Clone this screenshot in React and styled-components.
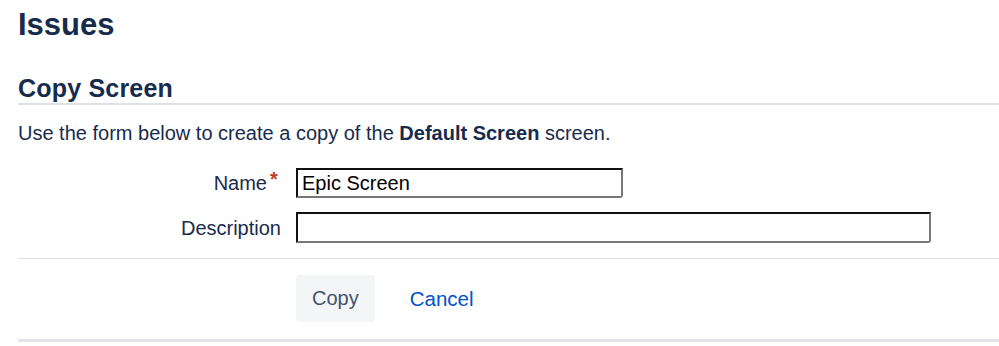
import styled, { createGlobalStyle } from 'styled-components';

const GlobalStyle = createGlobalStyle`
  html, body {
    margin: 0;
    padding: 0;
    background: #fff;
  }
  body {
    font-family: 'Liberation Sans', Arial, sans-serif;
    color: #172b4d;
  }
`;

const Page = styled.main`
  padding: 6px 0 0 18px;
`;

const Title = styled.h1`
  margin: 0;
  font-size: 31px;
  line-height: 37px;
  font-weight: 700;
  color: #172b4d;
`;

const Section = styled.section`
  margin-top: 30px;
`;

const SectionTitle = styled.h2`
  margin: 0;
  font-size: 25px;
  line-height: 30px;
  font-weight: 700;
  letter-spacing: 0.2px;
  color: #172b4d;
  border-bottom: 2px solid #dfe1e6;
`;

const Intro = styled.p`
  margin: 16px 0 0;
  font-size: 20px;
  line-height: 24px;
  b {
    font-weight: 700;
  }
`;

const Form = styled.form`
  margin-top: 23px;
`;

const Fields = styled.div`
  display: grid;
  grid-template-columns: 263px 1fr;
  column-gap: 15px;
  row-gap: 14px;
  align-items: center;
`;

const Label = styled.label`
  justify-self: end;
  display: flex;
  align-items: flex-start;
  font-size: 20px;
  line-height: 24px;
  color: #172b4d;
`;

const Required = styled.span`
  color: #c0392b;
  font-size: 20px;
  font-weight: 700;
  line-height: 16px;
  padding-left: 3px;
  width: 11px;
`;

const Input = styled.input`
  box-sizing: border-box;
  width: ${(p) => p.$w}px;
  height: ${(p) => p.$h}px;
  padding: 0 4px;
  font-family: 'Liberation Sans', Arial, sans-serif;
  font-size: 20px;
  color: #000;
  background: #fff;
  border-style: solid;
  border-width: 2px;
  border-color: #111 #777 #777 #111;
  border-radius: 0 0 3px 0;
  outline: none;
`;

const Actions = styled.div`
  margin-top: 15px;
  border-top: 1px solid #dfe1e6;
  border-bottom: 3px solid #e3e4e8;
  padding: 16px 0 17px 278px;
  display: flex;
  align-items: center;
  gap: 35px;
`;

const Button = styled.button`
  box-sizing: border-box;
  height: 47px;
  padding: 0 16px;
  border: none;
  border-radius: 4px;
  background: #f4f5f7;
  color: #42526e;
  font-family: 'Liberation Sans', Arial, sans-serif;
  font-size: 20px;
`;

const CancelLink = styled.a`
  color: #0052cc;
  font-size: 20.5px;
  text-decoration: none;
`;

export default function App() {
  return (
    <>
      <GlobalStyle />
      <Page>
        <Title>Issues</Title>
        <Section>
          <SectionTitle>Copy Screen</SectionTitle>
          <Intro>
            Use the form below to create a copy of the <b>Default Screen</b> screen.
          </Intro>
          <Form onSubmit={(e) => e.preventDefault()}>
            <Fields>
              <Label htmlFor="name">
                Name<Required>*</Required>
              </Label>
              <Input id="name" $w={327} $h={30} defaultValue="Epic Screen" />
              <Label htmlFor="description">Description</Label>
              <Input id="description" $w={635} $h={31} defaultValue="" />
            </Fields>
            <Actions>
              <Button type="submit">Copy</Button>
              <CancelLink href="#">Cancel</CancelLink>
            </Actions>
          </Form>
        </Section>
      </Page>
    </>
  );
}
